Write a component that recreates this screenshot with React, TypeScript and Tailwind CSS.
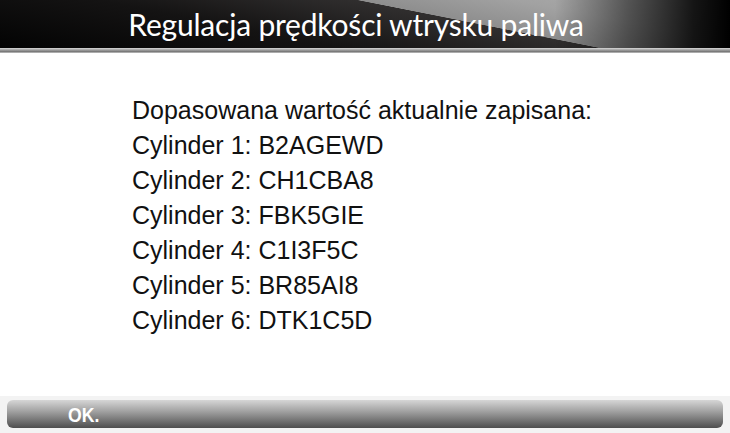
import React from "react";

const lines = [
  "Dopasowana wartość aktualnie zapisana:",
  "Cylinder 1: B2AGEWD",
  "Cylinder 2: CH1CBA8",
  "Cylinder 3: FBK5GIE",
  "Cylinder 4: C1I3F5C",
  "Cylinder 5: BR85AI8",
  "Cylinder 6: DTK1C5D",
];

export default function App() {
  return (
    <div className="w-[730px] h-[433px] bg-white flex flex-col overflow-hidden">
      <div className="h-[48px] bg-[linear-gradient(90deg,transparent_0%,transparent_76%,rgba(0,0,0,0.5)_86%,rgba(0,0,0,0.88)_95%,#000_100%),linear-gradient(11.2deg,#030303_0%,#141313_35%,#302e2e_61.5%,#8e8e8e_61.8%,#a2a2a2_78%,#b0b0b0_100%)] flex items-center justify-center pr-[18px]">
        <span className="text-white text-[30px] leading-none font-['Lato',sans-serif] pb-[1px] tracking-[-0.2px]">
          Regulacja prędkości wtrysku paliwa
        </span>
      </div>
      <div className="h-[5px] bg-[linear-gradient(180deg,#d8d8d8_0%,#a0a0a0_40%,#7a7a7a_70%,#c4c4c4_100%)]" />
      <div className="flex-1 flex flex-col pl-[132px] pt-[40px] font-['Liberation_Sans',sans-serif] text-[25px] leading-[35px] text-[#111]">
        {lines.map((l) => (
          <div key={l}>{l}</div>
        ))}
      </div>
      <div className="h-[37px] bg-[#f3f3f3] px-[7px] pt-[4px] pb-[5px]">
        <div className="h-full rounded-[6px] bg-[linear-gradient(180deg,#d6d6d6_0%,#a2a2a2_40%,#4e4e4e_100%)] flex items-center pl-[61px]">
          <span className="text-white font-bold text-[21px] leading-none font-['Liberation_Sans',sans-serif] scale-x-[0.84] origin-left">OK.</span>
        </div>
      </div>
    </div>
  );
}
